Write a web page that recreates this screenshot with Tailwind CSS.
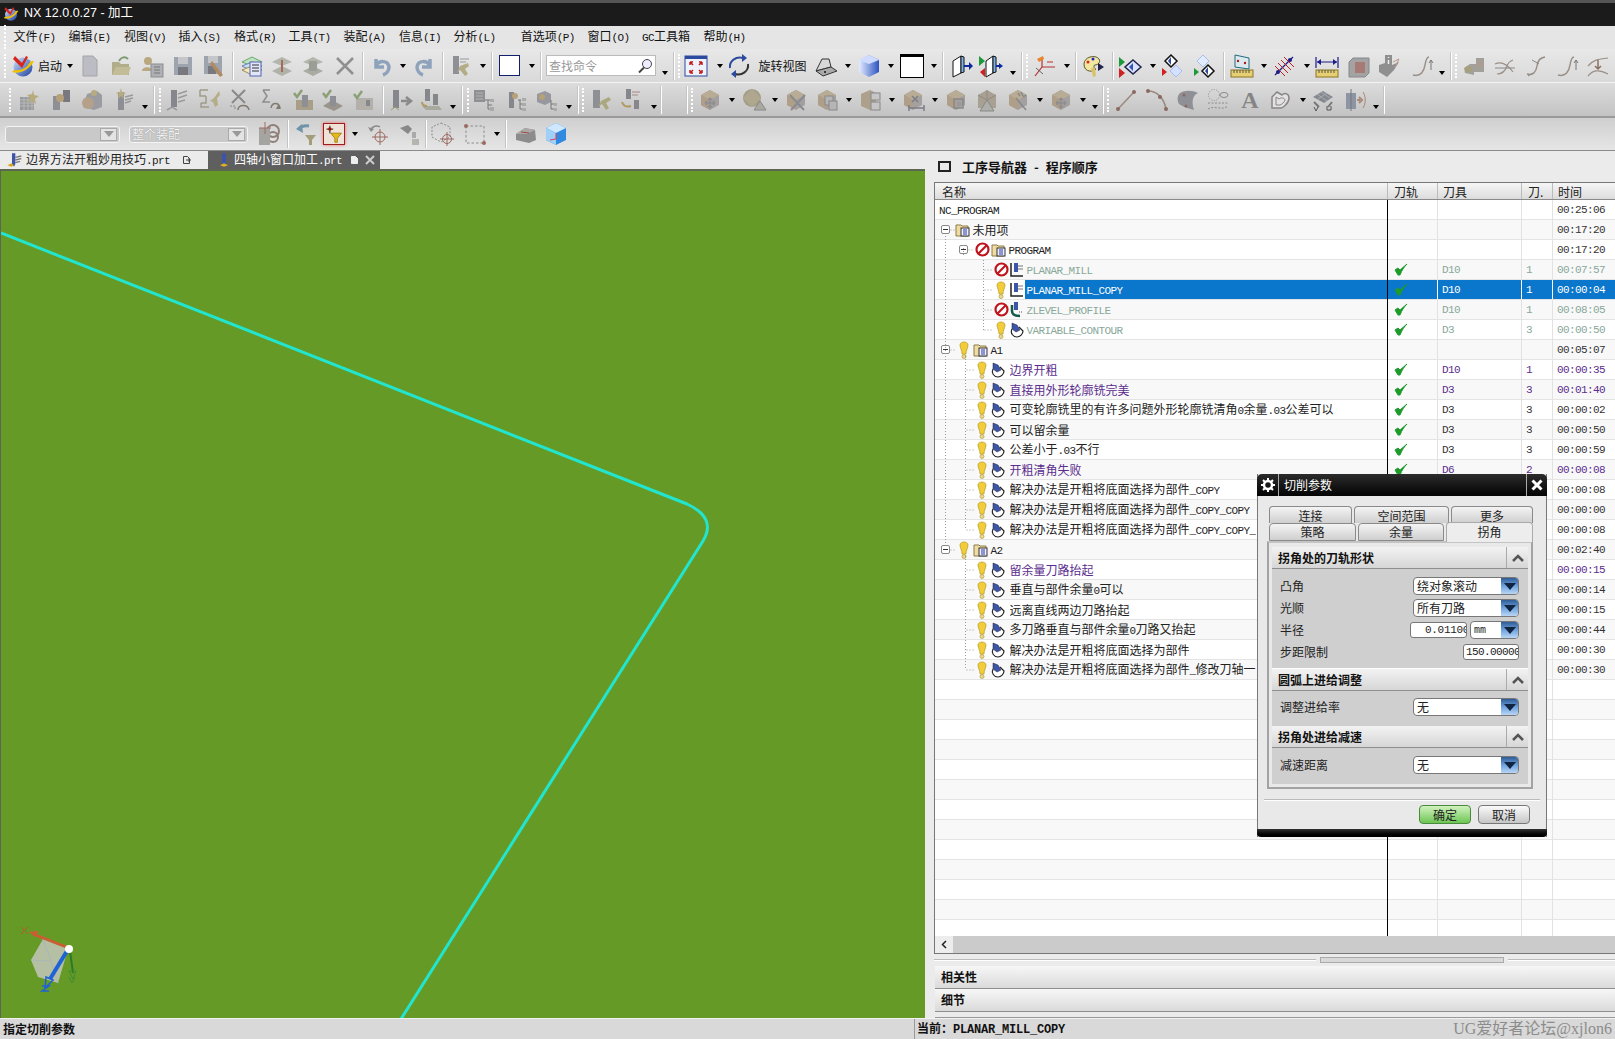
<!DOCTYPE html>
<html>
<head>
<title>NX 12.0.0.27 - 加工</title>
<script src="https://cdn.jsdelivr.net/npm/@tailwindcss/browser@4"></script>
</head>
<body class="bg-[#ebebeb] font-['Noto_Sans_CJK_SC',sans-serif] text-[12px] text-[#222]">
<svg class="absolute w-0 h-0">
  <defs>
    <linearGradient id="gb" x1="0" y1="0" x2="1" y2="1"><stop offset="0" stop-color="#cfe4ff"/><stop offset="1" stop-color="#1c3f9e"/></linearGradient>
    <linearGradient id="gc" x1="0" y1="0" x2="1" y2="0"><stop offset="0" stop-color="#e3ecff"/><stop offset="1" stop-color="#2d55c0"/></linearGradient>
  </defs>
</svg>
<div class="relative w-[1615px] h-[1039px] overflow-hidden flex flex-col">

  <!-- title bar -->
  <div class="h-[26px] border-t-[3px] border-[#555] bg-[#1b1b1b] flex items-center pl-[3px] pb-[2px] gap-[5px] text-white text-[12.5px] font-['Liberation_Sans','Noto_Sans_CJK_SC',sans-serif]">
    <svg class="w-[16px] h-[16px]" viewBox="0 0 24 24"><circle cx="12" cy="13" r="9" fill="url(#gb)"/><path d="M1 18C9 21 19 15 23 7c-2 0-3 0-4 1-3 6-9 9-16 8z" fill="#f2c200"/><path d="M4 2l7 7 4-7 2 1-6 11-9-9z" fill="#d8261c"/></svg>
    <span>NX 12.0.0.27 - 加工</span>
  </div>

  <!-- menu bar -->
  <div id="menu" class="h-[23px] bg-[#e5e5e5] flex items-center pb-[2px]"></div>

  <div id="tb1" class="h-[34px] bg-gradient-to-b from-[#e8e8e8] to-[#d9d9d9] border-b border-[#f4f4f4] flex items-center"></div>
  <div id="tb2" class="h-[35px] bg-gradient-to-b from-[#dcdcdc] to-[#c3c3c3] border-b-2 border-[#9a9a9a] flex items-center"></div>
  <div id="tb3" class="h-[33px] bg-gradient-to-b from-[#cfcfcf] to-[#e6e6e6] border-b border-[#8a8a8a] flex items-center"></div>

  <!-- main area -->
  <div class="h-[867px] flex">
    <div class="w-[925px] flex flex-col">
      <div class="h-[18px] flex bg-[#ebebeb]">
        <div class="w-[208px] flex items-center pl-[6px] gap-[4px]">
          <svg class="w-[16px] h-[16px]" viewBox="0 0 24 24"><path d="M9 2h5v16l-2 4-3-4z" fill="#3c55a8"/><path d="M14 8l9-2M14 12l9-2M14 16l7-2" stroke="#777" stroke-width="2"/><path d="M2 20l6-3 4 3-4 2z" fill="#d9a520"/></svg>
          <span id="tab1"></span>
          <svg class="w-[10px] h-[10px] ml-[8px]" viewBox="0 0 10 10"><path d="M1.500 1.500h4l2 2v5h-6zM4 5h5M7 3v4" fill="none" stroke="#444"/></svg>
        </div>
        <div class="w-[172px] bg-[#5f5f5f] flex items-center pl-[8px] text-white">
          <svg class="w-[16px] h-[16px]" viewBox="0 0 24 24"><path d="M9 2h6v16l-3 4-3-4z" fill="#3c55a8"/><path d="M6 20l6-3 6 3-6 2z" fill="#e0b020"/></svg>
          <span id="tab2" class="ml-[2px]"></span>
          <svg class="w-[10px] h-[10px] ml-[8px]" viewBox="0 0 10 10"><path d="M1.500 1.500h4l2 2v5h-6z" fill="#eee" stroke="#eee"/></svg>
          <svg class="w-[10px] h-[10px] ml-[5px]" viewBox="0 0 10 10"><path d="M1 1l8 8M9 1l-8 8" stroke="#ccc" stroke-width="2"/></svg>
        </div>
      </div>
      <!-- graphics window -->
      <div class="relative flex-1 bg-[#669a26] border-t-2 border-l border-[#5c6650]">
        <svg class="absolute left-0 top-0 w-[924px] h-[847px]" viewBox="0 0 924 847">
          <path d="M0 62L686 333Q716 347 702 370L400 848" fill="none" stroke="#22e5cf" stroke-width="3"/>
          <!-- triad -->
          <path d="M42 768L67 778L57 812L37 806L30 789z" fill="#b5bfa4"/>
          <path d="M42 768L50 790L57 812M50 790L30 789" stroke="#a9b7b8" fill="none"/>
          <path d="M68 777L32 763" stroke="#cf5b34" stroke-width="2.500"/>
          <path d="M28 761l9-1-2 6z" fill="#cf5b34"/>
          <path d="M20 756l7 7M27 756l-7 7" stroke="#b25a2a"/>
          <path d="M69 780l3 22" stroke="#2b7a28" stroke-width="2"/>
          <path d="M68 800h7l-3 8zM68 806l3 6 3-6" fill="none" stroke="#3f8c30"/>
          <path d="M66 780L49 808" stroke="#1d63d6" stroke-width="4"/>
          <path d="M45 806l7 3-8 8zM41 815h7l-7 5h7" fill="none" stroke="#1d63d6" stroke-width="1.500"/>
          <circle cx="68" cy="778" r="4" fill="#fff"/>
        </svg>
      </div>
    </div>

    <div class="flex-1 bg-[#ebebeb] flex flex-col">
      <div class="h-[31px] flex items-center pl-[13px]">
        <span class="w-[13px] h-[11px] border-2 border-[#222]"></span>
        <span class="ml-[11px] text-[13px] font-bold text-[#111]">工序导航器<span class="mx-[7px]">-</span>程序顺序</span>
      </div>
      <div class="ml-[9px] h-[772px] border border-[#777] border-r-0 flex flex-col bg-white">
        <div class="h-[17px] flex bg-gradient-to-b from-[#f6f6f6] to-[#dcdcdc] border-b border-[#8a8a8a] text-[#222]">
          <div class="w-[453px] pl-[7px] border-r border-[#bbb] leading-[18px]">名称</div>
          <div class="w-[50px] pl-[6px] border-r border-[#bbb] leading-[18px]">刀轨</div>
          <div class="w-[84px] pl-[5px] border-r border-[#bbb] leading-[18px]">刀具</div>
          <div class="w-[31px] pl-[6px] border-r border-[#bbb] leading-[18px]">刀.</div>
          <div class="flex-1 pl-[5px] leading-[18px]">时间</div>
        </div>
        <div class="relative flex-1 overflow-hidden">
          <div id="rows"></div>
          <svg id="lines" class="absolute left-0 top-0 w-[60px] h-[480px]" viewBox="0 0 60 480"></svg>
          <div class="absolute left-[452px] top-0 bottom-0 w-px bg-black"></div>
        </div>
        <div class="h-[17px] flex bg-[#cbcbcb]">
          <div class="w-[18px] bg-[#ededed] flex items-center justify-center">
            <svg class="w-[6px] h-[9px]" viewBox="0 0 6 9"><path d="M5 1L1.500 4.500L5 8" fill="none" stroke="#222" stroke-width="1.500"/></svg>
          </div>
        </div>
      </div>
      <div class="h-[12px] ml-[9px] flex items-center">
        <div class="w-[382px] border-t border-b border-t-[#bbb] border-b-white h-[2px]"></div>
        <div class="w-[184px] ml-[4px] h-[6px] border border-[#aaa] bg-[#d8d8d8]"></div>
        <div class="flex-1 ml-[4px] border-t border-b border-t-[#bbb] border-b-white h-[2px]"></div>
      </div>
      <div class="ml-[10px] h-[23px] bg-gradient-to-b from-[#f7f7f7] to-[#dadada] border-b border-[#8f8f8f] pl-[6px] font-bold text-[#111] leading-[22px]">相关性</div>
      <div class="ml-[10px] h-[23px] bg-gradient-to-b from-[#f7f7f7] to-[#dadada] border-b border-[#8f8f8f] pl-[6px] font-bold text-[#111] leading-[22px]">细节</div>
      <div class="ml-[10px] mt-[5px] border-t border-[#999]"></div>
    </div>
  </div>

  <!-- status bar -->
  <div class="h-[21px] bg-[#d9d9d9] border-t border-[#f2f2f2] flex items-center">
    <div class="w-[914px] pl-[3px] font-bold text-[#111]">指定切削参数</div>
    <div class="flex-1 h-full border-l border-[#999] pl-[2px] flex items-center justify-between">
      <span class="font-bold text-[#111]">当前：<span class="font-['Liberation_Mono'] text-[12px] tracking-[-0.2px]">PLANAR_MILL_COPY</span></span>
      <span class="text-[16px] text-[#8c8c8c] mr-[3px] font-['Liberation_Serif','Noto_Sans_CJK_SC',serif]">UG爱好者论坛@xjlon6</span>
    </div>
  </div>

  <!-- cut parameters dialog -->
  <div class="absolute left-[1257px] top-[474px] w-[290px] h-[363px] bg-[#e9e9e9] border-x border-[#777] flex flex-col">
    <div class="h-[22px] bg-gradient-to-b from-[#2c2c2c] to-[#050505] rounded-t-[5px] -mx-px flex items-center text-white">
      <div class="w-[22px] h-full flex items-center justify-center border-r border-[#aaa]">
        <svg class="w-[14px] h-[14px]" viewBox="0 0 14 14"><circle cx="7" cy="7" r="4" fill="none" stroke="#fff" stroke-width="2.500"/><path d="M7 0v3M7 11v3M0 7h3M11 7h3M2 2l2 2M10 10l2 2M12 2l-2 2M4 10l-2 2" stroke="#fff" stroke-width="2"/></svg>
      </div>
      <span class="ml-[5px]">切削参数</span>
      <div class="ml-auto w-[21px] h-full flex items-center justify-center border-l border-[#aaa]">
        <svg class="w-[12px] h-[12px]" viewBox="0 0 12 12"><path d="M1.500 1.500l9 9M10.500 1.500l-9 9" stroke="#fff" stroke-width="3"/></svg>
      </div>
    </div>
    <div class="h-[10px]"></div>
    <div class="flex h-[17px] ml-[11px] gap-[2px]">
      <div class="w-[83px] text-center rounded-t-[4px] border border-b-0 border-[#8a8a8a] bg-gradient-to-b from-[#f4f4f4] to-[#cfcfcf] leading-[18px]">连接</div>
      <div class="w-[95px] text-center rounded-t-[4px] border border-b-0 border-[#8a8a8a] bg-gradient-to-b from-[#f4f4f4] to-[#cfcfcf] leading-[18px]">空间范围</div>
      <div class="w-[82px] text-center rounded-t-[4px] border border-b-0 border-[#8a8a8a] bg-gradient-to-b from-[#f4f4f4] to-[#cfcfcf] leading-[18px]">更多</div>
    </div>
    <div class="flex h-[18px] ml-[11px] gap-[2px]">
      <div class="w-[87px] text-center rounded-t-[4px] border border-[#8a8a8a] bg-gradient-to-b from-[#f4f4f4] to-[#cfcfcf] leading-[16px]">策略</div>
      <div class="w-[86px] text-center rounded-t-[4px] border border-[#8a8a8a] bg-gradient-to-b from-[#f4f4f4] to-[#cfcfcf] leading-[16px]">余量</div>
      <div class="w-[87px] -mt-px h-[20px] z-10 text-center rounded-t-[4px] border border-b-0 border-[#aaa] bg-[#ededed] leading-[17px]">拐角</div>
    </div>
    <div class="ml-[9px] w-[266px] h-[248px] border-2 border-[#a3a3a3] border-t-[#c4c4c4] bg-[#e9e9e9] px-[3px] pt-[4px]">
      <div class="h-[22px] flex bg-gradient-to-b from-[#f3f3f3] to-[#d6d6d6] border-b border-[#8f8f8f]">
        <div class="flex-1 pl-[6px] font-bold text-[#111] leading-[21px]">拐角处的刀轨形状</div>
        <div class="w-[22px] border-l border-[#aaa] flex items-center justify-center">
          <svg class="w-[12px] h-[8px]" viewBox="0 0 12 8"><path d="M1 7L6 2L11 7" fill="none" stroke="#555" stroke-width="2.500"/></svg>
        </div>
      </div>
      <div class="h-[99px] bg-[#cfcfcf] pl-[8px] pr-[9px] pt-[8px] flex flex-col gap-[4px]">
        <div class="flex h-[18px] items-center justify-between"><span>凸角</span><span data-sel="106">绕对象滚动</span></div>
        <div class="flex h-[18px] items-center justify-between"><span>光顺</span><span data-sel="106">所有刀路</span></div>
        <div class="flex h-[18px] items-center"><span>半径</span>
          <span class="ml-auto w-[57px] h-[16px] bg-white border border-[#777] rounded-[3px] overflow-hidden pl-[14px] font-['Liberation_Mono'] text-[11px] tracking-[-0.3px] leading-[15px] whitespace-nowrap">0.01100</span>
          <span class="ml-[3px]" data-sel="49" data-mono="1">mm</span>
        </div>
        <div class="flex h-[18px] items-center justify-between"><span>步距限制</span>
          <span class="w-[56px] h-[16px] bg-white border border-[#777] rounded-[3px] overflow-hidden pl-[2px] font-['Liberation_Mono'] text-[11px] tracking-[-0.6px] leading-[15px] whitespace-nowrap">150.00000</span>
        </div>
      </div>
      <div class="h-[23px] flex bg-gradient-to-b from-[#f3f3f3] to-[#d6d6d6] border-b border-[#8f8f8f] border-t border-t-white">
        <div class="flex-1 pl-[6px] font-bold text-[#111] leading-[21px]">圆弧上进给调整</div>
        <div class="w-[22px] border-l border-[#aaa] flex items-center justify-center">
          <svg class="w-[12px] h-[8px]" viewBox="0 0 12 8"><path d="M1 7L6 2L11 7" fill="none" stroke="#555" stroke-width="2.500"/></svg>
        </div>
      </div>
      <div class="h-[35px] bg-[#cfcfcf] pl-[8px] pr-[9px] pt-[7px]">
        <div class="flex h-[18px] items-center justify-between"><span>调整进给率</span><span data-sel="106">无</span></div>
      </div>
      <div class="h-[22px] flex bg-gradient-to-b from-[#f3f3f3] to-[#d6d6d6] border-b border-[#8f8f8f]">
        <div class="flex-1 pl-[6px] font-bold text-[#111] leading-[21px]">拐角处进给减速</div>
        <div class="w-[22px] border-l border-[#aaa] flex items-center justify-center">
          <svg class="w-[12px] h-[8px]" viewBox="0 0 12 8"><path d="M1 7L6 2L11 7" fill="none" stroke="#555" stroke-width="2.500"/></svg>
        </div>
      </div>
      <div class="h-[36px] bg-[#cfcfcf] pl-[8px] pr-[9px] pt-[8px]">
        <div class="flex h-[18px] items-center justify-between"><span>减速距离</span><span data-sel="106">无</span></div>
      </div>
    </div>
    <div class="mx-[6px] mt-[10px] border-t border-b border-t-[#bbb] border-b-white h-[2px]"></div>
    <div class="flex justify-end gap-[7px] mt-[4px] pr-[16px]">
      <div class="w-[52px] h-[19px] rounded-[4px] border border-[#4a8a3c] bg-gradient-to-b from-[#d0f2bd] to-[#6cc552] text-center leading-[18px]">确定</div>
      <div class="w-[52px] h-[19px] rounded-[4px] border border-[#777] bg-gradient-to-b from-[#fbfbfb] to-[#c6c6c6] text-center leading-[18px]">取消</div>
    </div>
    <div class="mt-auto h-[8px] -mx-px bg-gradient-to-b from-[#333] to-[#000] rounded-b-[4px]"></div>
  </div>
</div>

<script>
  // small text in the Latin half-width look of the original bitmap font
  function mix(s) {
    return s.replace(/[\x00-\x7f]+/g, m => `<span class="font-['Liberation_Mono'] text-[11px] tracking-[-0.6px] whitespace-pre">${m}</span>`);
  }

  const cubeBase = '<path d="M12 2l9 5v10l-9 5-9-5V7z" fill="#a5a0a0"/><path d="M12 2l9 5-9 5-9-5z" fill="#b8ac94"/><path d="M3 7l9 5v10l-9-5z" fill="#b09f88"/>';
  const cube = o => cubeBase + o;
  const icons = {
    logo: '<circle cx="12" cy="13" r="9.500" fill="url(#gb)"/><path d="M1 18C9 21 19 15 23 7c-2 0-3 0-4 1-3 6-9 9-16 8z" fill="#f2c200"/><path d="M4 2l7 7 4-7 2 1-6 11-9-9z" fill="#d8261c"/>',
    doc: '<path d="M5 2h10l4 4v16H5z" fill="#bcbcc4" stroke="#a4a4a8"/>',
    open: '<path d="M3 8h7l2 2h8v11H3z" fill="#b1ad8a"/><path d="M3 21l4-8h15l-3 8z" fill="#c2bd98"/><path d="M10 7c2-4 6-5 9-2" stroke="#7f9a72" stroke-width="2" fill="none"/>',
    user: '<circle cx="8" cy="7" r="4" fill="#b9a77e"/><path d="M2 17c0-5 10-5 11 0z" fill="#b9a77e"/><rect x="11" y="10" width="12" height="13" fill="#aeb0b4" stroke="#8e8e92"/><path d="M14 13h6M14 16h6M14 19h6" stroke="#777"/>',
    save: '<rect x="3" y="3" width="18" height="18" fill="#9ea4ad"/><rect x="7" y="3" width="10" height="7" fill="#c4c6ca"/><rect x="7" y="13" width="10" height="8" fill="#77797e"/>',
    saveas: '<rect x="2" y="2" width="18" height="18" fill="#9ea4ad"/><rect x="6" y="2" width="10" height="7" fill="#c4c6ca"/><rect x="6" y="12" width="8" height="8" fill="#77797e"/><path d="M10 7l11 14-3 2L8 10z" fill="#b08a62"/>',
    stack: '<path d="M2 8l10-5 10 5-10 4z" fill="#bfe3c0" stroke="#6aa76c"/><path d="M2 12l10-4 10 4-10 5z" fill="#c8dcf2" stroke="#6b83b5"/><path d="M2 16l10-4 10 4-10 5z" fill="#f2e9c0" stroke="#9a8b5a"/><rect x="10" y="8" width="11" height="14" fill="#e2e6f8" stroke="#5364b5"/><path d="M12 11h7M12 14h7M12 17h7" stroke="#333"/>',
    lay1: '<path d="M2 8l10-5 10 5-10 4z" fill="#b2b6ac"/><path d="M2 17l10-5 10 5-10 5z" fill="#aeb2a8"/><path d="M12 6v12" stroke="#a86a5a" stroke-width="2"/>',
    lay2: '<path d="M2 8l10-5 10 5-10 4z" fill="#b2b6ac"/><path d="M2 17l10-5 10 5-10 5z" fill="#a8aca2"/><rect x="8" y="7" width="8" height="10" fill="#9a9e96"/>',
    x: '<path d="M4 4l16 16M20 4L4 20" stroke="#8f8f8f" stroke-width="2.500"/>',
    undo: '<path d="M7 5v8l8 0M7 12c3-6 12-6 13 1 0 4-3 7-6 8" fill="none" stroke="#8ea3bb" stroke-width="3.500"/>',
    redo: '<path d="M18 5v8l-8 0M18 12c-3-6-12-6-13 1 0 4 3 7 6 8" fill="none" stroke="#8ea3bb" stroke-width="3.500"/>',
    wr: '<rect x="4" y="2" width="6" height="18" fill="#8e9096"/><path d="M11 12l8-3 1 3-4 3 3 5-3 2-5-6-3 3z" fill="#b2ad87"/><path d="M11 5h9M11 8h6" stroke="#9a9a9a"/>',
    spark: '<rect x="3" y="9" width="14" height="13" fill="#98999e"/><path d="M3 12h14M3 15h14M3 18h14M7 9v13M11 9v13M15 9v13" stroke="#b8b8b8"/><path d="M16 2l1 5 5 1-4 3 1 5-4-3-4 2 2-5-3-3 5-1z" fill="#b7ab80"/>',
    mill2: '<rect x="4" y="8" width="7" height="14" fill="#8d8f95"/><rect x="14" y="2" width="7" height="12" fill="#77797e"/><circle cx="11" cy="10" r="4" fill="#b6a179"/>',
    blob: '<path d="M7 6l10-3 5 4v12l-8 3-11-3z" fill="#9a9ca2"/><circle cx="8" cy="15" r="6" fill="#b5a08a"/><circle cx="14" cy="5" r="3" fill="#b7ab80"/>',
    mspark: '<rect x="7" y="4" width="6" height="18" fill="#8d8f95"/><path d="M14 9l8-2M14 12l8-2M14 15l6-2" stroke="#9a9a9a" stroke-width="1.500"/><path d="M10 0l1 4 4 1-3 2 1 4-3-3-3 3 1-4-3-2 4-1z" fill="#b7ab80"/>',
    lines: '<rect x="6" y="2" width="6" height="17" fill="#85878d"/><path d="M13 6l9-3M13 10l9-3M13 14l7-2M2 22l5-3 5 3" stroke="#9a9a9a" stroke-width="1.500" fill="none"/>',
    sw: '<path d="M3 2h8M3 2v6h6M9 8v7H4M4 15v4h8" fill="none" stroke="#a09c8a" stroke-width="1.500"/><path d="M13 13l4-3 5-7 1 4-3 3 1 7-3 2-2-5z" fill="#b4ad88"/>',
    xcur: '<path d="M4 2l13 13M17 2L4 15" stroke="#8a8a8a" stroke-width="2"/><path d="M2 18h5v4" stroke="#8a8a8a" stroke-dasharray="2 1" fill="none"/><path d="M10 22c0-6 10-6 11 0" fill="none" stroke="#807a70" stroke-width="1.500"/>',
    scur: '<path d="M4 2h7M4 2l4 6-4 6h7" fill="none" stroke="#8d8d8d" stroke-width="1.500"/><path d="M12 20c1-6 8-6 9 0" fill="none" stroke="#807a70" stroke-width="1.500"/><path d="M19 17l3 4-5 0z" fill="#807a70"/>',
    ck1: '<rect x="4" y="12" width="17" height="10" fill="#a99f88"/><rect x="10" y="7" width="6" height="12" fill="#8d8f95"/><path d="M2 5l3 4 5-7" fill="none" stroke="#8ba074" stroke-width="2.500"/>',
    ck2: '<path d="M2 18l9-6 11 6-9 5z" fill="#9a958a"/><rect x="9" y="8" width="6" height="10" fill="#8d8f95"/><path d="M2 5l3 4 5-7" fill="none" stroke="#8ba074" stroke-width="2.500"/>',
    ck3: '<rect x="4" y="10" width="17" height="12" fill="#b2b0a8"/><path d="M14 12h4v6h-4z" fill="#85878d"/><path d="M2 6l3 4 5-7" fill="none" stroke="#8ba074" stroke-width="2.500"/>',
    millarr: '<rect x="3" y="2" width="6" height="18" fill="#85878d"/><path d="M11 13h8M16 9l5 4-5 4" stroke="#8a8a8a" stroke-width="2.500" fill="none"/><path d="M1 22l4-3 4 3" stroke="#a09c70" fill="none"/>',
    milltr: '<rect x="5" y="1" width="5" height="12" fill="#85878d"/><rect x="13" y="6" width="5" height="11" fill="#85878d"/><path d="M2 18h17l3 4H6z" fill="#a8a89e"/><path d="M2 14c0 4 3 4 5 4" stroke="#b09a62" stroke-width="2" fill="none"/>',
    tree1: '<rect x="2" y="2" width="11" height="12" fill="#8e9096"/><path d="M4 5h7M4 8h7M4 11h7" stroke="#b4b4b4"/><path d="M13 12h5M16 12v9M16 17h4M16 21h4" stroke="#777"/><rect x="18" y="11" width="4" height="3" fill="#aaa"/><rect x="18" y="19" width="4" height="4" fill="#aaa"/>',
    tree2: '<rect x="5" y="4" width="5" height="16" fill="#85878d"/><circle cx="11" cy="8" r="3" fill="#b6a179"/><path d="M14 12h3M16 12v9M16 16h4M16 21h4" stroke="#777"/><rect x="18" y="10" width="4" height="3" fill="#aaa"/><rect x="18" y="15" width="4" height="3" fill="#aaa"/><rect x="18" y="20" width="4" height="3" fill="#aaa"/>',
    tree3: '<path d="M3 6l8-3 6 3v8l-6 3-8-3z" fill="#96989e"/><circle cx="8" cy="9" r="3" fill="#b6a179"/><path d="M17 12v9M17 16h3M17 21h3" stroke="#777"/><rect x="20" y="15" width="3" height="3" fill="#aaa"/><rect x="20" y="20" width="3" height="3" fill="#aaa"/>',
    wr2: '<rect x="4" y="2" width="7" height="18" fill="#8e9096"/><path d="M12 13l8-4 2 3-5 3 3 5-3 2-4-6-4 3z" fill="#aba77f"/>',
    ml2: '<rect x="6" y="1" width="5" height="10" fill="#85878d"/><rect x="14" y="12" width="5" height="9" fill="#85878d"/><path d="M12 4h8M12 7l6 0" stroke="#a88"/><path d="M2 14c2 5 6 5 9 4" stroke="#b09a62" stroke-width="2" fill="none"/>',
    c1: cube('<path d="M12 10v10M7 15h10M12 10l-2 2M12 10l2 2M12 20l-2-2M12 20l2-2M7 15l2-2M7 15l2 2M17 15l-2-2M17 15l-2 2" stroke="#8d8d92" stroke-width="1.500"/>'),
    c2: '<circle cx="10" cy="10" r="9" fill="#a49e88"/><path d="M1 10l9-9 9 9-9 9z" fill="#b0a88e"/><path d="M12 22l6-9 6 9z" fill="#a9a9a0" stroke="#888"/>',
    c3: cube('<path d="M6 7l14 15M21 7L7 22" stroke="#8a8a92" stroke-width="2"/>'),
    c4: cube('<rect x="10" y="8" width="8" height="9" fill="#b5b5b5" stroke="#888"/><rect x="14" y="13" width="8" height="9" fill="#b5b5b5" stroke="#888"/>'),
    c5: '<path d="M3 6l9-4 6 3v17H12l-9-4z" fill="#ada08c"/><rect x="13" y="5" width="9" height="7" fill="#c6c6c6" stroke="#888"/><rect x="13" y="14" width="9" height="8" fill="#c6c6c6" stroke="#888"/>',
    c6: cube('<path d="M8 20h15M8 17v6M23 17v6M11 8l6 6M17 8l-6 6" stroke="#7c7c86" stroke-width="1.500"/>'),
    c7: cube('<rect x="10" y="11" width="9" height="9" fill="none" stroke="#888" stroke-width="1.500"/><rect x="13" y="14" width="4" height="4" fill="#999"/>'),
    c8: '<path d="M12 2l9 5v13H3V7z" fill="#a9a094"/><path d="M12 2v10M3 7l9 5 9-5" stroke="#928a80" fill="none"/><path d="M5 23l7-11 7 11z" fill="#aeaeaa" stroke="#888"/>',
    c9: cube('<path d="M10 10l10 12M15 4l2 4M20 7l-3 2M12 5l2 3" stroke="#888" stroke-width="1.500"/>'),
    kf: '<path d="M2 14l6-4h6V4h8v14H12v3l-9-2z" fill="#a3a09a"/><path d="M3 14c2-3 6-3 7 0s-4 6-7 3z" fill="#a6a17c"/><path d="M14 8h6M14 11h6" stroke="#bb9a8a"/>',
    cr1: '<path d="M2 10c6-3 12 0 18 8M4 20c4 0 8-2 10-8 1-3 3-5 6-6" fill="none" stroke="#9a8f86" stroke-width="1.200"/><path d="M2 14h20" stroke="#8a8a8a"/>',
    cr2: '<path d="M3 20c6 2 9-2 10-8s3-8 8-9" fill="none" stroke="#9a8f86" stroke-width="1.500"/><path d="M8 6l7 4M4 22l5-3" stroke="#888"/>',
    cr3: '<path d="M3 21c8 2 11-4 12-10s2-8 4-8" fill="none" stroke="#9a8f86" stroke-width="1.500"/><path d="M21 6v10M19 9l2-3 2 3" stroke="#777" fill="none"/>',
    cr4: '<path d="M2 12c5-6 10-7 20-8M2 22c5-6 10-7 20-2" fill="none" stroke="#9a8f86" stroke-width="1.200"/><path d="M12 6v9M9 12l3 3 3-3" stroke="#8a7060" fill="none" stroke-width="1.500"/>',
    line: '<path d="M4 21L20 4" stroke="#9a8a80" stroke-width="1.500"/><circle cx="4" cy="21" r="2" fill="#8a6a60"/><circle cx="20" cy="4" r="2" fill="#8a6a60"/>',
    arc: '<path d="M3 3c9 0 16 7 18 18" fill="none" stroke="#9a8a80" stroke-width="1.500"/><circle cx="3" cy="3" r="2" fill="#8a6a60"/><circle cx="15" cy="9" r="2" fill="#8a6a60"/><circle cx="21" cy="21" r="2" fill="#8a6a60"/>',
    surf: '<path d="M5 5c5-3 12-3 18 0-5 2-7 8-4 17-6-2-11-3-15-6-2-4-2-8 1-11z" fill="#8e9095"/><circle cx="9" cy="7" r="1.500" fill="#8a6a60"/><circle cx="11" cy="18" r="1.500" fill="#8a6a60"/>',
    pts: '<circle cx="8" cy="7" r="5.500" fill="none" stroke="#8c8c8c" stroke-dasharray="1 1.500"/><ellipse cx="18" cy="7" rx="4" ry="2.500" fill="none" stroke="#8c8c8c"/><path d="M2 15h20M2 21c6-4 14 2 20-3" fill="none" stroke="#8c8c8c" stroke-dasharray="2 1.500"/>',
    text: '<text x="12" y="20" text-anchor="middle" font-family="Liberation Serif" font-weight="700" font-size="24" fill="#858585">A</text>',
    off: '<path d="M3 9l5-5 5 3c3-3 7-1 7 3 0 6-7 10-8 10H3z" fill="#e2e2e2" stroke="#8a8585" stroke-width="1.500"/><path d="M7 9l3 2c2-2 6-1 6 1s-4 5-5 5H7z" fill="none" stroke="#8a8585"/>',
    uv: '<path d="M2 9l10-6 10 6-9 6z" fill="#858a92"/><path d="M6 6l10 7M10 4l9 6M16 5L7 11" stroke="#aaa"/><path d="M3 14l5 5M21 14l-4 5" stroke="#777" stroke-width="2"/><path d="M3 19l2 4 2-4M16 18v4h4v-4" fill="none" stroke="#555"/>',
    cyl: '<rect x="3" y="5" width="10" height="16" fill="#8d95a5"/><path d="M8 1v22" stroke="#777"/><path d="M14 12h3M16 9l3 3-3 3" stroke="#a98a78" stroke-width="2" fill="none"/><path d="M20 4c3 5 3 11 0 16" stroke="#a98a78" fill="none"/>',
    comb: '<circle cx="16" cy="9" r="6" fill="none" stroke="#8f7f78" stroke-width="2"/><circle cx="16" cy="15" r="5" fill="none" stroke="#8f7f78" stroke-width="2"/><path d="M2 6h11v17H2z" fill="#a4a4a0"/><path d="M8 0v12M2 6h12" stroke="#a06d60"/>',
    arrf: '<path d="M5 8c0-3 5-5 10-4" fill="none" stroke="#6f94a8" stroke-width="3"/><path d="M8 2L2 7l7 4z" fill="#6f94a8"/><path d="M11 13h11l-4 5v5h-3v-5z" fill="#a49d7a"/>',
    filt: '<path d="M7 2v9M3 6h8" stroke="#442" stroke-width="1.500"/><circle cx="7" cy="6" r="2" fill="#a01010"/><path d="M8 11h13l-5 6v5h-3v-5z" fill="#e8b818" stroke="#9a7c10"/>',
    rot: '<path d="M6 8c1-4 6-5 9-3" fill="none" stroke="#8b8b8b" stroke-width="1.500"/><path d="M3 5l3 5 3-3z" fill="#8b8b8b"/><circle cx="15" cy="15" r="5" fill="none" stroke="#9a6a60"/><path d="M15 7v16M7 15h16" stroke="#9a6a60"/>',
    bino: '<path d="M3 6l8-3 4 4-4 5z" fill="#888"/><rect x="15" y="10" width="4" height="6" fill="#aaa"/><rect x="15" y="17" width="7" height="6" fill="#b5b5b0"/>',
    dcube: '<path d="M10 1l9 4v10l-9 5-9-5V5z" fill="none" stroke="#8c8c8c" stroke-dasharray="2 1.500"/><circle cx="16" cy="17" r="4.500" fill="none" stroke="#9a6a60"/><path d="M16 10v14M9 17h14" stroke="#9a6a60"/>',
    drect: '<rect x="3" y="4" width="18" height="17" fill="none" stroke="#8c8c8c" stroke-dasharray="2.500 2"/><circle cx="3" cy="4" r="2" fill="#9a6a60"/><circle cx="21" cy="21" r="2" fill="#9a6a60"/>',
    stamp: '<path d="M3 12l9-6 10 2 1 10-7 3-13-3z" fill="#8c8c8c"/><path d="M3 12l9-6 10 2-8 4z" fill="#a9a9a9"/><path d="M8 10l8 1" stroke="#a04a40"/>',
    wcube: '<path d="M12 1l10 5v12l-10 5-10-5V6z" fill="#2f8ae0"/><path d="M2 6l10-5 10 5-10 5z" fill="#cfe8ff"/><path d="M2 6l10 5v12L2 18z" fill="#9fd0f7"/><path d="M12 11v6l-6 1" fill="none" stroke="#e03a5a"/>',
    fit: '<rect x="1" y="2" width="22" height="20" fill="#eef2fb" stroke="#2d4b9e"/><rect x="1" y="2" width="22" height="3" fill="#2d4b9e"/><path d="M6 8l3 3M6 8h3M6 8v3M18 8l-3 3M18 8h-3M18 8v3M6 19l3-3M6 19h3M6 19v-3M18 19l-3-3M18 19h-3M18 19v-3" stroke="#c41d1d" stroke-width="1.500"/>',
    rotv: '<path d="M3 14c-1-7 6-12 13-10" fill="none" stroke="#2d4b9e" stroke-width="2"/><path d="M21 10c1 7-6 12-13 10" fill="none" stroke="#333" stroke-width="2"/><path d="M15 0l5 4-5 4zM9 16l-5 4 5 4z" fill="#2d4b9e"/>',
    plane: '<path d="M2 17l6-12h7l2 8z" fill="#d8d8d8" stroke="#333"/><path d="M2 17l15-4 6 4-14 5z" fill="#aaa" stroke="#333"/><circle cx="11" cy="18" r="1" fill="#111"/>',
    cube: '<path d="M12 1l10 5v12l-10 5-10-5V6z" fill="url(#gc)"/><path d="M2 6l10-5 10 5-10 4z" fill="#cfdcff"/>',
    bxarr: '<path d="M3 7l8-5v17l-8 4z" fill="#fff" stroke="#111"/><path d="M11 2l3 1v15l-3 1z" fill="#7fb3e8" stroke="#111"/><path d="M14 12h6" stroke="#0b2aa0" stroke-width="2"/><path d="M19 8l4 4-4 4z" fill="#0b2aa0"/>',
    bxarr2: '<path d="M0 2l6 5-6 5z" fill="#1c9a3a"/><path d="M6 14l-5 4 5 5z" fill="#cc2222"/><path d="M7 7l7-5v17l-7 4z" fill="#fff" stroke="#111"/><path d="M14 2l3 1v15l-3 1z" fill="#7fb3e8" stroke="#111"/><path d="M17 12h4" stroke="#0b2aa0" stroke-width="2"/><path d="M20 9l4 3-4 3z" fill="#0b2aa0"/>',
    axes: '<path d="M9 13V3M9 13L2 22M9 13l13 0" stroke="#b43030" stroke-width="1.200" fill="none"/><path d="M4 5l6-3 1 3-5 3z" fill="#e8842a"/><path d="M3 14l7 6" stroke="#666"/><path d="M14 8h6" stroke="#b43030"/>',
    pal: '<path d="M3 10C3 3 14 0 18 5c2 3-1 6-4 6-2 0-1 4 1 4-2 3-12 4-12-5z" fill="#f2e7a0" stroke="#5a5a2a"/><circle cx="7" cy="8" r="1.500" fill="#d22"/><circle cx="12" cy="5" r="1.500" fill="#22c"/><path d="M17 9l6 4-6 4z" fill="#22224a"/><path d="M10 14l2 9 3-1-1-8z" fill="#d9c36a"/>',
    play1: '<path d="M1 3l6 5-6 5z" fill="#1c9a3a"/><path d="M1 14l6 5-6 5z" fill="#cc2222"/><path d="M15 6l8 7-8 7-8-7z" fill="#d8e3ff" stroke="#22224a" stroke-width="1.500"/><path d="M15 9l-4 4 4 4z" fill="#3853b8"/>',
    play2: '<path d="M10 1l6 6-6 6-6-6z" fill="#fff" stroke="#111" stroke-width="1.500"/><path d="M10 3L7 7l3 4z" fill="#2d4b9e"/><path d="M15 11l6 6-6 6-6-6z" fill="#d3e0ff" stroke="#a8bde8"/><path d="M1 14l5 4-5 4z" fill="#cc2222"/>',
    play3: '<path d="M10 1l6 6-6 6-6-6z" fill="#e2ecff" stroke="#a8bde8"/><path d="M15 11l6 6-6 6-6-6z" fill="#fff" stroke="#111" stroke-width="1.500"/><path d="M15 13l-3 4 3 4z" fill="#2d4b9e"/><path d="M1 14l5 4-5 4z" fill="#1c9a3a"/>',
    meas: '<path d="M5 1l14 3v11L5 13z" fill="#dbe8ee" stroke="#1d6b80"/><circle cx="8" cy="7" r="1.200" fill="#b01818"/><circle cx="15" cy="9" r="1.200" fill="#b01818"/><rect x="1" y="16" width="22" height="7" fill="#e7cf73" stroke="#8a7420"/><path d="M4 16v3M7 16v3M10 16v3M13 16v3M16 16v3M19 16v3" stroke="#554"/>',
    hatch: '<path d="M3 21L21 3" stroke="#1c1c8a" stroke-width="1.200"/><path d="M3 12l10 10M6 9l10 10M9 6l10 10M12 3l10 10" stroke="#c02020"/><circle cx="6" cy="18" r="2" fill="#1c1c8a"/><circle cx="18" cy="6" r="2" fill="#1c1c8a"/>',
    dim: '<path d="M1 3v11M23 3v11M2 8h20" stroke="#1c1c8a" stroke-width="1.200"/><path d="M2 8l4-3v6zM22 8l-4-3v6z" fill="#1c1c8a"/><rect x="1" y="16" width="22" height="7" fill="#e7cf73" stroke="#8a7420"/><path d="M4 16v3M7 16v3M10 16v3M13 16v3M16 16v3M19 16v3" stroke="#554"/>',
    boxr: '<path d="M6 4h16v15l-4 4H2V8z" fill="#a3a3a3" stroke="#888"/><path d="M8 8h10v11H8z" fill="#a77a76"/>',
    info: '<path d="M8 1h7v10l7-3-5 8-7 7-8-5V11l6-2z" fill="#8f8f8f"/><path d="M11.500 3v1M11.500 6v4" stroke="#eee" stroke-width="1.500"/><path d="M16 8l6-3-4 8" fill="none" stroke="#b89a8a"/>'
  };

  function svg(name, size) {
    return `<svg class="overflow-visible" width="${size || 24}" height="${size || 24}" viewBox="0 0 24 24">${icons[name]}</svg>`;
  }

  // each entry: [kind, center x, extra]. Items flow left to right, the gaps come from the data.
  function toolbar(items) {
    let x = 0, html = '';
    for (const [kind, cx, arg] of items) {
      let w, el;
      if (kind === 'i') { w = 24; el = svg(arg); }
      else if (kind === 'a') { w = 6; el = '<span class="block w-0 h-0 border-x-[3px] border-t-[4px] border-x-transparent border-t-black"></span>'; }
      else if (kind === 'b') { w = 6; el = '<span class="block w-0 h-0 mt-[14px] border-x-[3px] border-t-[4px] border-x-transparent border-t-black"></span>'; }
      else if (kind === 's') { w = 2; el = '<span class="block w-[2px] h-[28px] border-l border-r border-l-[#c4c4c4] border-r-white"></span>'; }
      else if (kind === 'g') { w = 2; el = '<span class="block w-[2px] h-[24px] border-l-2 border-dotted border-white"></span>'; }
      else if (kind === 't') { w = arg[1]; el = `<span class="block whitespace-nowrap text-[#111]" style="width:${arg[1]}px">${arg[0]}</span>`; }
      else if (kind === 'x') { w = arg.w; el = arg.html; }
      html += `<div class="shrink-0 flex items-center" style="margin-left:${(cx - w / 2) - x}px">${el}</div>`;
      x = cx + w / 2;
    }
    return html;
  }

  const combo = (w, label) => `<div class="h-[17px] bg-[#c9c9c9] border border-[#f4f4f4] rounded-[3px] flex items-center overflow-hidden" style="width:${w}px"><span class="flex-1 pl-[2px] text-[#f6f6f6] [text-shadow:0_0_1px_#777]">${label}</span><span class="w-[17px] h-[13px] mr-[2px] bg-[#e4e4e4] border border-[#aaa] flex items-center justify-center"><span class="block w-0 h-0 border-x-[5px] border-t-[6px] border-x-transparent border-t-[#999]"></span></span></div>`;

  document.getElementById('menu').innerHTML = toolbar([
    ['g', 5], 
    ...[['文件(F)', 13.5], ['编辑(E)', 68.5], ['视图(V)', 124], ['插入(S)', 178.5], ['格式(R)', 234], ['工具(T)', 288.5], ['装配(A)', 343.5], ['信息(I)', 399], ['分析(L)', 453.5], ['首选项(P)', 520.7, 54], ['窗口(O)', 587.5], ['GC工具箱', 642, 48], ['帮助(H)', 703.5]]
      .map(([t, x, w]) => ['t', x + (w || 42) / 2, [mix(t), w || 42]])
  ]);

  document.getElementById('tb1').innerHTML = toolbar([
    ['g', 5], ['i', 23, 'logo'], ['t', 50, ['启动', 24]], ['a', 70], ['i', 90, 'doc'], ['i', 121, 'open'], ['i', 152, 'user'], ['i', 183, 'save'], ['i', 214, 'saveas'],
    ['s', 233], ['i', 252, 'stack'], ['i', 282, 'lay1'], ['i', 313, 'lay2'], ['i', 345, 'x'],
    ['s', 363], ['i', 381, 'undo'], ['a', 403], ['i', 424, 'redo'], ['s', 443], ['i', 461, 'wr'], ['a', 483], ['s', 492],
    ['x', 509.5, { w: 21, html: '<span class="block w-[21px] h-[21px] bg-white border border-[#10206a]"></span>' }], ['a', 532], ['s', 541],
    ['x', 601, { w: 110, html: '<div class="w-[110px] h-[21px] bg-white border border-[#bbb] flex items-center pl-[2px] text-[#999]"><span>查找命令</span><svg class="ml-auto mr-[2px] w-[16px] h-[16px]" viewBox="0 0 16 16"><circle cx="10" cy="6" r="4.500" fill="#eef" stroke="#444"/><path d="M7 9.500L2 14.500" stroke="#444" stroke-width="2"/></svg></div>' }],
    ['b', 665], ['s', 674], ['g', 679], ['i', 696, 'fit'], ['a', 720], ['i', 739, 'rotv'], ['t', 782.5, ['旋转视图', 48]], ['i', 826, 'plane'], ['a', 848], ['i', 869, 'cube'], ['a', 891],
    ['x', 912, { w: 24, html: '<span class="block w-[24px] h-[24px] bg-white border border-black border-t-[3px]"></span>' }], ['a', 934], ['s', 943],
    ['i', 962, 'bxarr'], ['i', 991, 'bxarr2'], ['b', 1013], ['s', 1022], ['g', 1027], ['i', 1045, 'axes'], ['a', 1067], ['s', 1076], ['i', 1093, 'pal'], ['s', 1113],
    ['i', 1130, 'play1'], ['a', 1153], ['i', 1173, 'play2'], ['i', 1205, 'play3'], ['s', 1224], ['i', 1242, 'meas'], ['a', 1264], ['i', 1284, 'hatch'], ['a', 1307], ['i', 1327, 'dim'],
    ['i', 1359, 'boxr'], ['i', 1389, 'info'], ['i', 1422, 'cr3'], ['b', 1442], ['s', 1451], ['g', 1456], ['i', 1474, 'kf'], ['i', 1505, 'cr1'], ['i', 1536, 'cr2'], ['i', 1567, 'cr3'], ['i', 1598, 'cr4']
  ]);

  document.getElementById('tb2').innerHTML = toolbar([
    ['g', 10], ['i', 29, 'spark'], ['i', 61, 'mill2'], ['i', 92, 'blob'], ['i', 123, 'mspark'], ['b', 145], ['s', 154], ['g', 160], ['i', 177, 'lines'], ['i', 209, 'sw'], ['i', 240, 'xcur'], ['i', 271, 'scur'], ['i', 304, 'ck1'], ['i', 333, 'ck2'], ['i', 364, 'ck3'], ['s', 383],
    ['i', 402, 'millarr'], ['i', 432, 'milltr'], ['b', 453], ['s', 462], ['g', 468], ['i', 484, 'tree1'], ['i', 516, 'tree2'], ['i', 546, 'tree3'], ['b', 569], ['s', 578], ['g', 583], ['i', 601, 'wr2'], ['i', 632, 'ml2'], ['b', 654], ['s', 661],
    ['s', 687], ['g', 692], ['i', 710, 'c1'], ['a', 732], ['i', 754, 'c2'], ['a', 775], ['i', 796, 'c3'], ['i', 827, 'c4'], ['a', 849], ['i', 870, 'c5'], ['a', 892], ['i', 913, 'c6'], ['a', 935], ['i', 956, 'c7'], ['i', 987, 'c8'], ['i', 1018, 'c9'], ['a', 1040], ['i', 1061, 'c1'], ['a', 1083], ['b', 1095], ['s', 1103],
    ['g', 1108], ['i', 1126, 'line'], ['i', 1157, 'arc'], ['i', 1187, 'surf'], ['i', 1218, 'pts'], ['i', 1250, 'text'], ['i', 1281, 'off'], ['a', 1303], ['i', 1323, 'uv'], ['i', 1355, 'cyl'], ['b', 1376], ['s', 1384]
  ]);

  document.getElementById('tb3').innerHTML = toolbar([
    ['x', 62.5, { w: 115, html: combo(115, '') }], ['x', 188.5, { w: 119, html: combo(119, '整个装配') }], ['i', 269, 'comb'], ['s', 288], ['i', 306, 'arrf'],
    ['x', 334, { w: 22, html: `<span class="flex items-center justify-center w-[22px] h-[22px] bg-[#efe3d8] border border-[#9c1f1f] shadow-[0_0_3px_#e66]">${svg('filt', 20)}</span>` }],
    ['a', 355], ['i', 377, 'rot'], ['i', 409, 'bino'], ['s', 426], ['i', 443, 'dcube'], ['i', 475, 'drect'], ['a', 497], ['s', 506], ['i', 525, 'stamp'], ['i', 556, 'wcube']
  ]);

  document.getElementById('tab1').innerHTML = mix('边界方法开粗妙用技巧.prt');
  document.getElementById('tab2').innerHTML = mix('四轴小窗口加工.prt');

  // tree glyphs
  const minus = '<span class="w-[9px] h-[9px] bg-white border border-[#888] rounded-[2px] flex items-center justify-center"><span class="block w-[5px] h-px bg-[#333]"></span></span>';
  const bulb = '<svg width="10" height="18" viewBox="0 0 10 18"><path d="M1 4c0-4 8-4 8 0 0 3-2 5-2 9H3c0-4-2-6-2-9z" fill="#f2cc3a" stroke="#b59a22" stroke-width=".7"/><circle cx="5" cy="15.500" r="2" fill="#e6d9a0" stroke="#b59a22" stroke-width=".7"/></svg>';
  const noSign = '<svg width="15" height="15" viewBox="0 0 15 15"><circle cx="7.500" cy="7.500" r="6" fill="#fff" stroke="#c0141c" stroke-width="2.200"/><path d="M3 12L12 3" stroke="#c0141c" stroke-width="2.200"/></svg>';
  const folder = '<svg width="15" height="15" viewBox="0 0 15 15"><path d="M1 3h5l1 1h6v10H1z" fill="#f0dca0" stroke="#8b7b4a"/><rect x="6" y="6" width="8" height="8" fill="#eef" stroke="#333"/><path d="M8 8h4M8 10h4M8 12h4" stroke="#2a3aa8"/></svg>';
  const opPlanar = '<svg width="15" height="16" viewBox="0 0 15 16"><path d="M2 1v13h12" fill="none" stroke="#222" stroke-width="1.500"/><rect x="5" y="1" width="4" height="9" fill="#3c55a8"/><path d="M9 4h5M9 7h5" stroke="#777"/></svg>';
  const opZ = '<svg width="15" height="16" viewBox="0 0 15 16"><rect x="5" y="0" width="4" height="8" fill="#3c55a8"/><path d="M3 3v6c0 4 4 5 8 5" fill="none" stroke="#125a4a" stroke-width="2.500"/><path d="M10 10h4" stroke="#555" stroke-dasharray="1 1"/></svg>';
  const opV = '<svg width="15" height="16" viewBox="0 0 15 16"><path d="M3 7C1 11 4 15 8 15C11 15 14 12 14 9L10 5" fill="#fff" stroke="#222" stroke-width="1.200"/><path d="M3 1L8 3L11 8L7 10L3 7z" fill="#3c55a8" stroke="#223"  stroke-width=".5"/></svg>';
  const check = '<svg width="14" height="13" viewBox="0 0 14 13"><path d="M1 7l3 5 2 0C8 7 10 4 13 1L6 7 4 5z" fill="#1f9a2c" stroke="#1f9a2c"/></svg>';

  const P = '#5b2d8e', G = '#88a89a';
  // [text, kind, tool, count, time, colour]
  const data = [
    ['NC_PROGRAM', 'root', '', '', '00:25:06'],
    ['未用项', 'g1', '', '', '00:17:20'],
    ['PROGRAM', 'g2', '', '', '00:17:20'],
    ['PLANAR_MILL', 'off', 'D10', '1', '00:07:57', G, opPlanar],
    ['PLANAR_MILL_COPY', 'sel', 'D10', '1', '00:00:04', '#fff', opPlanar],
    ['ZLEVEL_PROFILE', 'off', 'D10', '1', '00:08:05', G, opZ],
    ['VARIABLE_CONTOUR', 'on', 'D3', '3', '00:00:50', G, opV],
    ['A1', 'g3', '', '', '00:05:07'],
    ['边界开粗', 'op', 'D10', '1', '00:00:35', P],
    ['直接用外形轮廓铣完美', 'op', 'D3', '3', '00:01:40', P],
    ['可变轮廓铣里的有许多问题外形轮廓铣清角0余量.03公差可以', 'op', 'D3', '3', '00:00:02'],
    ['可以留余量', 'op', 'D3', '3', '00:00:50'],
    ['公差小于.03不行', 'op', 'D3', '3', '00:00:59'],
    ['开粗清角失败', 'op', 'D6', '2', '00:00:08', P],
    // from here on the tool columns sit behind the dialog
    ['解决办法是开粗将底面选择为部件_COPY', 'op', '', '', '00:00:08'],
    ['解决办法是开粗将底面选择为部件_COPY_COPY', 'op', '', '', '00:00:00'],
    ['解决办法是开粗将底面选择为部件_COPY_COPY_', 'op', '', '', '00:00:08'],
    ['A2', 'g3', '', '', '00:02:40'],
    ['留余量刀路抬起', 'op', '', '', '00:00:15', P],
    ['垂直与部件余量0可以', 'op', '', '', '00:00:14'],
    ['远离直线两边刀路抬起', 'op', '', '', '00:00:15'],
    ['多刀路垂直与部件余量0刀路又抬起', 'op', '', '', '00:00:44'],
    ['解决办法是开粗将底面选择为部件', 'op', '', '', '00:00:30'],
    ['解决办法是开粗将底面选择为部件_修改刀轴一', 'op', '', '', '00:00:30']
  ];

  const ORIGIN = 935;
  function place(items) {
    let x = 0, html = '';
    for (const [el, cx, w] of items) {
      html += `<span class="shrink-0 flex items-center" style="margin-left:${(cx - ORIGIN - w / 2) - x}px">${el}</span>`;
      x = cx - ORIGIN + w / 2;
    }
    return html;
  }

  function nameCell(r) {
    const [text, kind, , , , color, op] = r;
    const mixed = mix(text);
    const label = `<span class="whitespace-nowrap overflow-hidden" style="color:${color || '#222'}">${mixed}</span>`;
    if (kind === 'root') return `<span class="pl-[4px] whitespace-nowrap">${mixed}</span>`;
    if (kind === 'g1') return place([[minus, 945, 9], [folder, 962, 15]]) + `<span class="ml-[3px]">${label}</span>`;
    if (kind === 'g2') return place([[minus, 963, 9], [noSign, 982, 15], [folder, 998, 15]]) + `<span class="ml-[3px]">${label}</span>`;
    if (kind === 'g3') return place([[minus, 945, 9], [bulb, 964, 10], [folder, 980, 15]]) + `<span class="ml-[3px]">${label}</span>`;
    if (kind === 'op') return place([[bulb, 982, 10], [opV, 997, 15]]) + `<span class="ml-[5px] overflow-hidden">${label}</span>`;
    const head = kind === 'off' ? noSign : bulb;
    const hw = kind === 'off' ? 15 : 10;
    const lead = place([[head, 1001, hw], [op, 1016, 15]]);
    if (kind === 'sel') return lead + `<span class="ml-[1px] flex-1 h-[19px] bg-[#0a76cc] pl-[2px] flex items-center text-white whitespace-nowrap"><span>${mixed}</span></span>`;
    return lead + `<span class="ml-[3px]">${label}</span>`;
  }

  let rows = '';
  for (let i = 0; i < 37; i++) {
    const r = data[i] || ['', 'empty', '', '', ''];
    const sel = r[1] === 'sel';
    const c = r[5] && !sel ? r[5] : (sel ? '#fff' : '#333');
    const hasOp = r[2] !== '';
    const cellBg = sel ? 'bg-[#0a76cc] border-white' : 'border-[#e2e2e2]';
    rows += `<div class="flex h-5 border-b border-[#e4e4e4] ${i % 2 ? 'bg-[#f8f8f8]' : 'bg-white'}">
      <div class="w-[453px] shrink-0 flex items-center overflow-hidden">${r[1] === 'empty' ? '' : nameCell(r)}</div>
      <div class="w-[50px] border-r flex items-center pl-[6px] ${cellBg}">${hasOp ? check : ''}</div>
      <div class="w-[84px] border-r flex items-center pl-[4px] pt-[1px] font-['Liberation_Mono'] text-[11px] tracking-[-0.6px] ${cellBg}" style="color:${c}">${r[2]}</div>
      <div class="w-[31px] border-r flex items-center pl-[4px] pt-[1px] font-['Liberation_Mono'] text-[11px] ${cellBg}" style="color:${c}">${r[3]}</div>
      <div class="flex-1 flex items-center pl-[4px] pt-[1px] font-['Liberation_Mono'] text-[11px] tracking-[-0.6px] ${sel ? 'bg-[#0a76cc]' : ''}" style="color:${c}">${r[4]}</div>
    </div>`;
  }
  document.getElementById('rows').innerHTML = rows;

  // dotted tree lines, relative to the first row
  const L = (x1, y1, x2, y2) => `<path d="M${x1 + .5} ${y1}L${x2 + .5} ${y2}" stroke="#9a9a9a" stroke-dasharray="1 2" fill="none"/>`;
  let tree = L(10, 36, 10, 345) + L(28, 55, 28, 44) + L(15, 30, 21, 30) + L(15, 150, 21, 150) + L(15, 350, 21, 350) + L(33, 50, 39, 50);
  tree += L(48, 60, 48, 130);
  [70, 90, 110, 130].forEach(y => tree += L(49, y, 57, y));
  tree += L(30, 156, 30, 330);
  for (let i = 8; i <= 16; i++) tree += L(31, 10 + 20 * i, 39, 10 + 20 * i);
  tree += L(30, 356, 30, 470);
  for (let i = 18; i <= 23; i++) tree += L(31, 10 + 20 * i, 39, 10 + 20 * i);
  document.getElementById('lines').innerHTML = tree;

  // dialog dropdowns
  document.querySelectorAll('[data-sel]').forEach(el => {
    const w = el.dataset.sel;
    const mono = el.dataset.mono;
    const outer = document.createElement('span');
    outer.className = 'h-[18px] bg-white border border-[#777] rounded-[4px] flex items-center overflow-hidden ' + (el.className || '');
    outer.style.width = w + 'px';
    outer.innerHTML = `<span class="flex-1 pl-[3px] whitespace-nowrap ${mono ? "font-['Liberation_Mono'] text-[10px]" : ''}">${el.textContent}</span>
      <span class="w-[17px] h-full bg-gradient-to-b from-[#2f5c96] via-[#6fa2de] to-[#b9d6f4] flex items-center justify-center"><span class="block w-0 h-0 border-x-[6px] border-t-[7px] border-x-transparent border-t-[#10243f]"></span></span>`;
    el.replaceWith(outer);
  });
</script>
</body>
</html>
